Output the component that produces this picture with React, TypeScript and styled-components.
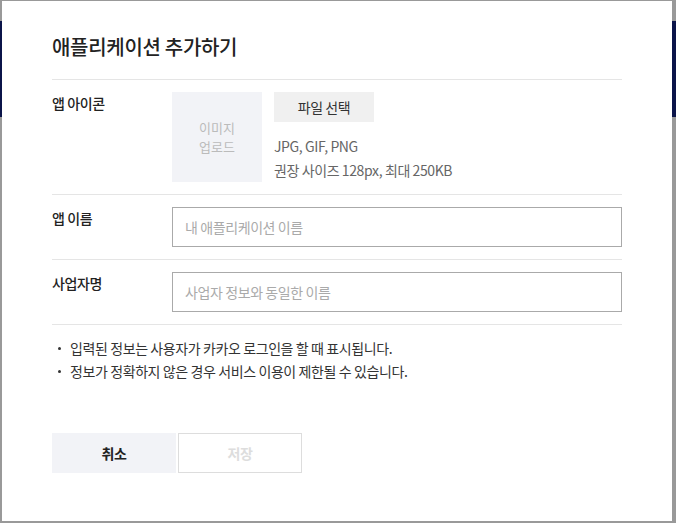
import React from 'react'
import styled, { createGlobalStyle } from 'styled-components'

const GlobalStyle = createGlobalStyle`
  html, body {
    margin: 0;
    padding: 0;
    height: 100%;
  }
  body {
    background: #999999;
    font-family: 'Noto Sans CJK KR', 'Noto Sans', sans-serif;
    color: #222;
    letter-spacing: -0.4px;
    overflow: hidden;
  }
  * {
    box-sizing: border-box;
  }
`

// 뒤쪽 페이지 (딤 처리된 상태)
const Backdrop = styled.div`
  width: 676px;
  height: 523px;
  padding-top: 21px;
`

const HeaderBand = styled.div`
  height: 96px;
  background: #0b1449;
`

// 모달
const Modal = styled.div`
  position: absolute;
  left: 2px;
  top: 1px;
  width: 670px;
  height: 520px;
  background: #fff;
  padding: 33px 50px 48px;
  display: flex;
  flex-direction: column;
`

const Title = styled.h2`
  margin: 0;
  font-size: 20px;
  line-height: 26px;
  font-weight: 500;
  letter-spacing: -0.3px;
  color: #222;
  padding-bottom: 19px;
  border-bottom: 1px solid #e5e5e5;
`

const Row = styled.div`
  display: grid;
  grid-template-columns: 120px 1fr;
  padding: 12px 0;
  border-bottom: 1px solid #e5e5e5;
`

const Label = styled.div`
  font-size: 14px;
  line-height: 22px;
  font-weight: 500;
  color: #222;
`

const IconField = styled.div`
  display: flex;
  gap: 12px;
`

const ImageBox = styled.div`
  width: 90px;
  height: 90px;
  background: #f2f3f7;
  display: flex;
  flex-direction: column;
  align-items: center;
  justify-content: center;
`

const ImageBoxLine = styled.span`
  font-size: 13px;
  line-height: 19px;
  letter-spacing: 0;
  color: #bbb;
`

const FileInfo = styled.div`
  display: flex;
  flex-direction: column;
  align-items: flex-start;
`

const FileButton = styled.button`
  width: 100px;
  height: 30px;
  border: 0;
  background: #f0f0f0;
  font-family: inherit;
  font-size: 14px;
  letter-spacing: -0.4px;
  color: #333;
  padding: 0;
`

const Hint = styled.p`
  margin: 12px 0 0;
  font-size: 14px;
  line-height: 24px;
  color: #666;
`

const TextInput = styled.input`
  width: 100%;
  height: 40px;
  border: 1px solid #aaa;
  padding: 0 12px;
  font-family: inherit;
  font-size: 14px;
  letter-spacing: -0.4px;
  color: #222;
  outline: none;
  &::placeholder {
    color: #aaa;
  }
`

const Notes = styled.ul`
  list-style: none;
  margin: 0;
  padding: 12px 0 0 6px;
`

const Note = styled.li`
  display: flex;
  align-items: center;
  height: 23px;
  font-size: 14px;
  line-height: 23px;
  color: #333;
  &::before {
    content: '';
    width: 3px;
    height: 3px;
    border-radius: 50%;
    background: #333;
    margin-right: 9px;
  }
`

const Buttons = styled.div`
  margin-top: auto;
  display: flex;
  gap: 2px;
`

const ActionButton = styled.button<{ $primary?: boolean }>`
  width: 124px;
  height: 40px;
  font-family: inherit;
  font-size: 14px;
  font-weight: 700;
  letter-spacing: -0.4px;
  padding: 0;
  background: ${(p) => (p.$primary ? '#fff' : '#f2f3f7')};
  border: ${(p) => (p.$primary ? '1px solid #ddd' : '0')};
  color: ${(p) => (p.$primary ? '#ddd' : '#222')};
`

export default function App() {
  return (
    <>
      <GlobalStyle />
      <Backdrop>
        <HeaderBand />
      </Backdrop>
      <Modal>
        <Title>애플리케이션 추가하기</Title>
        <Row>
          <Label>앱 아이콘</Label>
          <IconField>
            <ImageBox>
              <ImageBoxLine>이미지</ImageBoxLine>
              <ImageBoxLine>업로드</ImageBoxLine>
            </ImageBox>
            <FileInfo>
              <FileButton>파일 선택</FileButton>
              <Hint>
                JPG, GIF, PNG
                <br />
                권장 사이즈 128px, 최대 250KB
              </Hint>
            </FileInfo>
          </IconField>
        </Row>
        <Row>
          <Label>앱 이름</Label>
          <TextInput placeholder="내 애플리케이션 이름" />
        </Row>
        <Row>
          <Label>사업자명</Label>
          <TextInput placeholder="사업자 정보와 동일한 이름" />
        </Row>
        <Notes>
          <Note>입력된 정보는 사용자가 카카오 로그인을 할 때 표시됩니다.</Note>
          <Note>정보가 정확하지 않은 경우 서비스 이용이 제한될 수 있습니다.</Note>
        </Notes>
        <Buttons>
          <ActionButton>취소</ActionButton>
          <ActionButton $primary disabled>
            저장
          </ActionButton>
        </Buttons>
      </Modal>
    </>
  )
}
